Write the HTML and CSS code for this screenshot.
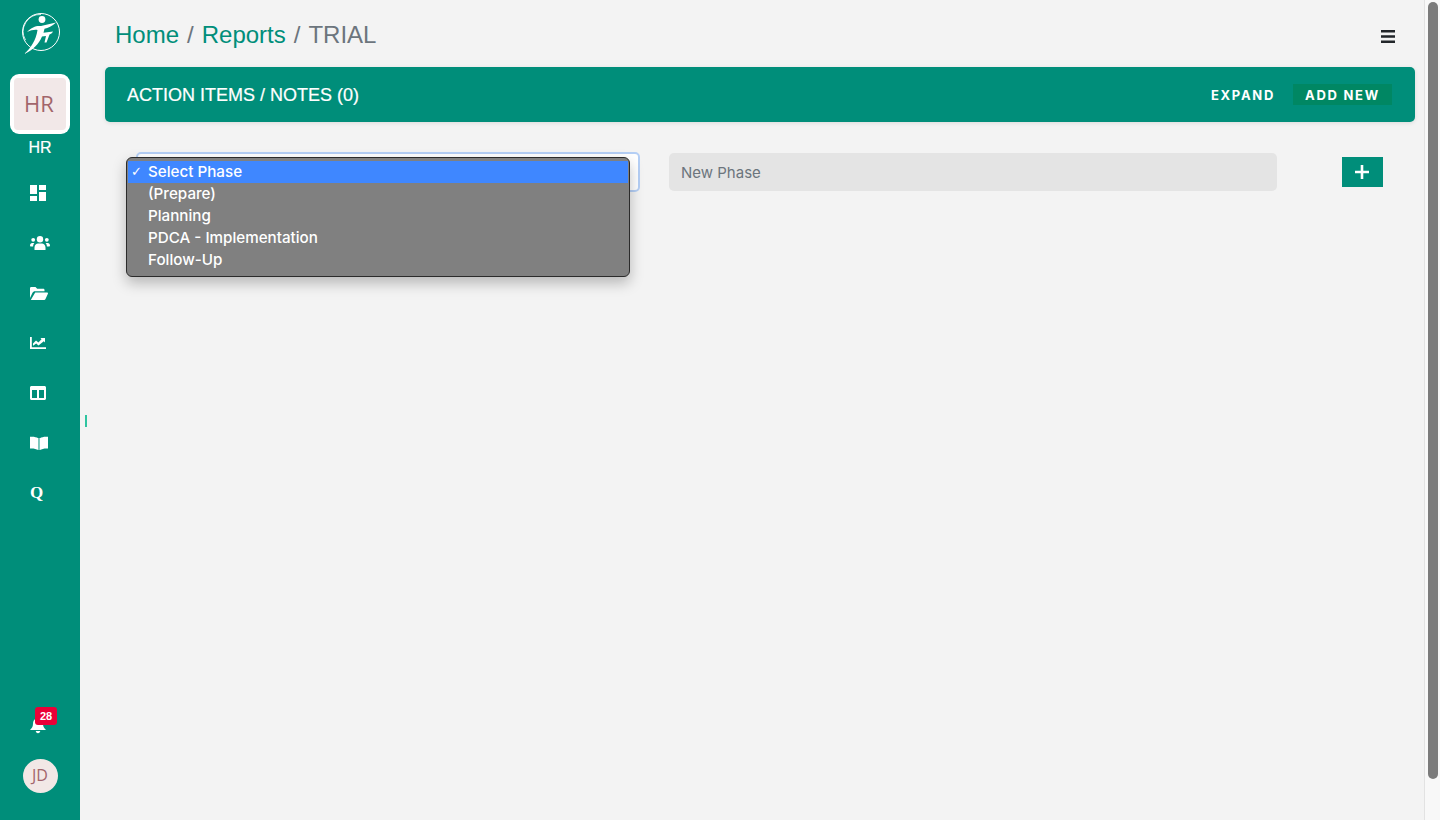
FILE: index.html
```html
<!DOCTYPE html>
<html lang="en">
<head>
<meta charset="utf-8">
<title>TRIAL</title>
<link rel="stylesheet" href="styles.css">
</head>
<body>
<aside class="sidebar">
  <svg class="logo" viewBox="0 0 40 42" width="40" height="42">
    <circle cx="20" cy="20" r="18.5" fill="none" stroke="#fff" stroke-width="1"/>
    <path d="M4.500 28A17 17 0 0 1 20 2.500" fill="none" stroke="#fff" stroke-width=".8"/>
    <circle cx="21" cy="7.500" r="3.400" fill="#fff"/>
    <path d="M6 20C11 15 15 13.500 20 14L35 10.500C31 14.500 27 16 23.500 16.800L22.500 20.800L32 19.500C31 21.500 30 22 28.500 22.500L25.500 30.500L23.500 30.500L25 24L21 24.500C18 32 12 38 3 42C10 36 15 28 16.500 18C13 17.500 10 18.500 6 20Z" fill="#fff"/>
  </svg>
  <div class="tile"><span class="tile-inner">HR</span></div>
  <div class="tile-label">HR</div>
  <nav class="nav">
    <a class="nav-item"><svg width="16" height="16" viewBox="0 0 16 16"><path fill="#fff" d="M0 0h7v9H0zM0 11h7v5H0zM9 0h7v5H9zM9 7h7v9H9z"/></svg></a>
    <a class="nav-item"><svg width="20" height="14" viewBox="0 0 20 14"><g fill="#fff"><circle cx="10" cy="3.200" r="3.200"/><circle cx="3.200" cy="3.800" r="1.900"/><circle cx="16.800" cy="3.800" r="1.900"/><path d="M4.500 14v-2.500C4.500 9 6.500 7.500 8 7.500h4c1.500 0 3.500 1.500 3.500 4V14zM0 9.500C0 8 1 7 2.200 7h2.200C3.500 8 3.200 9 3.100 10.500H1C.4 10.500 0 10 0 9.500zM20 9.500C20 8 19 7 17.800 7h-2.200c.9 1 1.200 2 1.300 3.500H19c.6 0 1-.5 1-1z"/></g></svg></a>
    <a class="nav-item"><svg width="18" height="13" viewBox="0 0 18 13"><g fill="#fff"><path d="M0 11V1.300C0 .6.500 0 1.300 0h4.200l1.700 1.800h6c.7 0 1.300.5 1.300 1.200v1.200H5C3.800 4.200 3 4.800 2.500 5.800z"/><path d="M5.200 5.400H17c.7 0 1.200.7.900 1.300l-2.400 5.400c-.2.500-.7.900-1.300.9H.8z"/></g></svg></a>
    <a class="nav-item"><svg width="16" height="12" viewBox="0 0 16 12"><path fill="#fff" d="M0 0h1.800v10.200H16V12H0z"/><path fill="#fff" d="M3 8.800V6.400l3-3 2.400 2L11.500 2.300 10.500 1H15v4.500L13.800 4.200 8.500 8.500 6.200 6.500z"/></svg></a>
    <a class="nav-item"><svg width="16" height="14" viewBox="0 0 16 14"><path fill="#fff" fill-rule="evenodd" d="M1.500 0h13C15.300 0 16 .7 16 1.500v11c0 .8-.7 1.500-1.500 1.500h-13C.7 14 0 13.300 0 12.500v-11C0 .7.700 0 1.500 0zM2 4v8h5V4zM9 4v8h5V4z"/></svg></a>
    <a class="nav-item"><svg width="18" height="14" viewBox="0 0 18 14"><path fill="#fff" d="M0 .8C3 .4 6 .8 8.300 2.200V14C6 12.700 3 12.200 0 12.500zM18 .8C15 .4 12 .8 9.900 2.200V14c2.100-1.300 5.100-1.800 8.100-1.500z"/><path fill="#8fd0c6" d="M8.300 2h1.600v12H8.300z"/></svg></a>
    <a class="nav-item nav-q">Q</a>
  </nav>
  <div class="sidebar-bottom">
    <div class="bell">
      <svg width="18" height="18" viewBox="0 0 18 18"><path fill="#fff" d="M9 1c1 0 1.500.6 1.500 1.400C13 3 14 5 14 8c0 3 1.500 4.500 3 6H1c1.500-1.500 3-3 3-6 0-3 1-5 3.500-5.600C7.500 1.600 8 1 9 1zM6.800 15h4.400c0 1.300-1 2.200-2.200 2.200S6.800 16.300 6.800 15z"/></svg>
      <span class="badge">28</span>
    </div>
    <div class="avatar">JD</div>
  </div>
</aside>

<main class="main">
  <header class="topbar">
    <div class="crumbs">
      <a class="crumb-link">Home</a><span class="crumb-sep">/</span><a class="crumb-link">Reports</a><span class="crumb-sep">/</span><span class="crumb-current">TRIAL</span>
    </div>
    <svg class="menu-icon" width="14" height="13" viewBox="0 0 14 13"><path fill="#212529" d="M0 0h14v2.400H0zM0 5.300h14v2.400H0zM0 10.600h14V13H0z"/></svg>
  </header>
  <section class="panel-head">
    <h2 class="panel-title">ACTION ITEMS / NOTES (0)</h2>
    <div class="panel-actions">
      <button class="text-btn">EXPAND</button>
      <button class="text-btn text-btn-fill">ADD NEW</button>
    </div>
  </section>
  <section class="phase-row">
    <div class="select-wrap">
      <div class="select-box"></div>
      <ul class="dropdown">
        <li class="opt opt-active"><span class="check">✓</span>Select Phase</li>
        <li class="opt">(Prepare)</li>
        <li class="opt">Planning</li>
        <li class="opt">PDCA - Implementation</li>
        <li class="opt">Follow-Up</li>
      </ul>
    </div>
    <div class="phase-input">New Phase</div>
    <button class="add-btn"><svg width="14" height="14" viewBox="0 0 14 14"><path fill="#fff" d="M5.700 0h2.600v5.700H14v2.600H8.300V14H5.700V8.300H0V5.700h5.700z"/></svg></button>
  </section>
  <span class="edge-mark"></span>
</main>

<div class="scrollbar"><div class="thumb"></div></div>
</body>
</html>
```
FILE: styles.css
```css
* { box-sizing: border-box; }
html, body { height: 100%; margin: 0; }
body {
  display: flex;
  height: 820px;
  overflow: hidden;
  background: #f3f3f3;
  font-family: "Liberation Sans", Arial, sans-serif;
}
.sidebar {
  width: 80px;
  flex: none;
  background: #008e7a;
  display: flex;
  flex-direction: column;
  align-items: center;
  padding-top: 12px;
}
.logo { display: block; margin-left: 2px; }
.tile {
  width: 60px;
  height: 60px;
  margin-top: 20px;
  padding: 4px;
  background: #fff;
  border-radius: 9px;
}
.tile-inner {
  display: flex;
  align-items: center;
  justify-content: center;
  width: 100%;
  height: 100%;
  padding: 0 2px 2px 0;
  background: #f2e8e8;
  border-radius: 4px;
  color: #a2656b;
  font-family: "Open Sans", sans-serif;
  font-size: 22px;
}
.tile-label {
  margin-top: 5px;
  height: 18px;
  line-height: 18px;
  color: #fff;
  font-size: 16px;
  -webkit-text-stroke: .2px #fff;
}
.nav {
  width: 100%;
  margin-top: 11px;
  padding-left: 30px;
  display: flex;
  flex-direction: column;
}
.nav-item {
  height: 50px;
  display: flex;
  align-items: center;
}
.nav-q {
  color: #fff;
  font-family: "Liberation Serif", serif;
  font-weight: 700;
  font-size: 17px;
}
.sidebar-bottom {
  margin-top: auto;
  width: 100%;
  padding-bottom: 27px;
  display: flex;
  flex-direction: column;
  align-items: center;
}
.bell {
  position: relative;
  width: 18px;
  height: 18px;
  margin-left: -4px;
  margin-bottom: 25px;
}
.bell svg { display: block; }
.badge {
  position: absolute;
  left: 6px;
  top: -9px;
  width: 22px;
  height: 18px;
  border-radius: 3px;
  background: #eb0037;
  color: #fff;
  font-size: 11px;
  font-weight: 700;
  line-height: 18px;
  text-align: center;
}
.avatar {
  width: 35px;
  height: 34px;
  border-radius: 50%;
  background: #f2e8e6;
  color: #a2656b;
  font-family: "Open Sans", sans-serif;
  font-size: 16px;
  line-height: 33px;
  text-align: center;
}
.main {
  position: relative;
  flex: 1;
  min-width: 0;
  padding: 0 9px 0 25px;
}
.topbar {
  height: 67px;
  display: flex;
  justify-content: space-between;
  padding: 0 20px 0 10px;
}
.crumbs {
  padding-top: 21px;
  font-size: 24px;
  line-height: 28px;
}
.crumb-link { color: #008e7a; }
.crumb-sep { color: #6c757d; padding: 0 8px; }
.crumb-current { color: #6c757d; }
.menu-icon { margin-top: 30px; }
.panel-head {
  height: 55px;
  display: flex;
  align-items: center;
  justify-content: space-between;
  padding: 0 23px 0 22px;
  background: #008e7a;
  border-radius: 5px;
  box-shadow: 0 1px 4px rgba(0, 0, 0, .1);
}
.panel-title {
  margin: 2px 0 0;
  color: #fff;
  font-size: 18px;
  font-weight: 400;
  -webkit-text-stroke: .2px #fff;
}
.panel-actions { display: flex; align-items: center; gap: 18px; }
.text-btn {
  height: 21px;
  padding: 0;
  border: 0;
  border-radius: 0;
  background: none;
  color: #fff;
  font-family: Inter, sans-serif;
  font-size: 13px;
  font-weight: 700;
  letter-spacing: 1.7px;
}
.text-btn-fill {
  width: 99px;
  background: #008763;
}
.phase-row {
  display: flex;
  align-items: flex-start;
  padding: 30px 0 0 31px;
}
.select-wrap {
  position: relative;
  width: 504px;
  height: 40px;
}
.select-box {
  width: 100%;
  height: 40px;
  background: #fff;
  border: 2px solid #b5cff5;
  border-radius: 5px;
}
.dropdown {
  position: absolute;
  left: -10px;
  top: 5px;
  width: 504px;
  height: 120px;
  margin: 0;
  padding: 3px 1px;
  list-style: none;
  background: #808080;
  border: 1px solid #2b2b2b;
  border-radius: 6px;
  box-shadow: 0 6px 14px rgba(0, 0, 0, .25);
  color: #fff;
  font-family: Inter, sans-serif;
  font-size: 15.200px;
  font-weight: 500;
}
.opt {
  position: relative;
  height: 22px;
  padding-left: 20px;
  line-height: 22px;
}
.opt-active { background: #3f87ff; }
.check {
  position: absolute;
  left: 3px;
  top: 0;
  font-family: "DejaVu Sans", sans-serif;
  font-size: 13px;
  font-weight: 700;
}
.phase-input {
  width: 608px;
  height: 38px;
  margin: 1px 0 0 29px;
  padding-left: 12px;
  background: #e4e4e4;
  border-radius: 5px;
  color: #6c757d;
  font-family: Inter, sans-serif;
  font-size: 15px;
  line-height: 39px;
}
.add-btn {
  width: 41px;
  height: 30px;
  margin: 5px 0 0 65px;
  padding: 0 2px 0 0;
  border: 0;
  border-radius: 0;
  background: #008e7a;
  display: flex;
  align-items: center;
  justify-content: center;
}
.edge-mark {
  position: absolute;
  left: 5px;
  top: 415px;
  width: 2px;
  height: 12px;
  background: #2ec4a0;
}
.scrollbar {
  width: 16px;
  flex: none;
  padding: 2px 2px 0 3px;
  background: #f8f8f8;
  border-left: 1px solid #e2e2e2;
}
.thumb {
  height: 777px;
  background: #7b7b7b;
  border-radius: 6px;
}
```
